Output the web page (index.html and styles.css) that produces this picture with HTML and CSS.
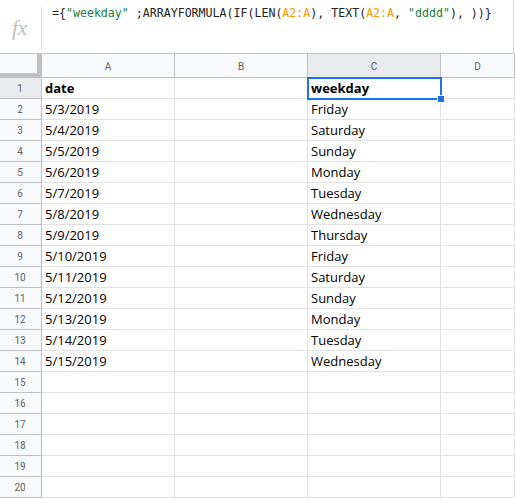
FILE: index.html
```html
<!DOCTYPE html>
<html>
<head>
<meta charset="utf-8">
<link rel="stylesheet" href="styles.css">
</head>
<body>
<div class="formula-bar">
  <div class="fx">fx</div>
  <div class="sep"></div>
  <div class="formula">={<span class="str">"weekday"</span> ;ARRAYFORMULA(IF(LEN(<span class="rng">A2:A</span>), TEXT(<span class="rng">A2:A</span>, <span class="str">"dddd"</span>), ))}</div>
</div>
<div class="sheet">
  <div class="corner"></div>
  <div class="colh">A</div>
  <div class="colh">B</div>
  <div class="colh sel">C</div>
  <div class="colh">D</div>

  <div class="rowh sel">1</div><div class="cell b">date</div><div class="cell"></div><div class="cell b active">weekday<span class="ring"></span><span class="handle"></span></div><div class="cell"></div>
  <div class="rowh">2</div><div class="cell">5/3/2019</div><div class="cell"></div><div class="cell">Friday</div><div class="cell"></div>
  <div class="rowh">3</div><div class="cell">5/4/2019</div><div class="cell"></div><div class="cell">Saturday</div><div class="cell"></div>
  <div class="rowh">4</div><div class="cell">5/5/2019</div><div class="cell"></div><div class="cell">Sunday</div><div class="cell"></div>
  <div class="rowh">5</div><div class="cell">5/6/2019</div><div class="cell"></div><div class="cell">Monday</div><div class="cell"></div>
  <div class="rowh">6</div><div class="cell">5/7/2019</div><div class="cell"></div><div class="cell">Tuesday</div><div class="cell"></div>
  <div class="rowh">7</div><div class="cell">5/8/2019</div><div class="cell"></div><div class="cell">Wednesday</div><div class="cell"></div>
  <div class="rowh">8</div><div class="cell">5/9/2019</div><div class="cell"></div><div class="cell">Thursday</div><div class="cell"></div>
  <div class="rowh">9</div><div class="cell">5/10/2019</div><div class="cell"></div><div class="cell">Friday</div><div class="cell"></div>
  <div class="rowh">10</div><div class="cell">5/11/2019</div><div class="cell"></div><div class="cell">Saturday</div><div class="cell"></div>
  <div class="rowh">11</div><div class="cell">5/12/2019</div><div class="cell"></div><div class="cell">Sunday</div><div class="cell"></div>
  <div class="rowh">12</div><div class="cell">5/13/2019</div><div class="cell"></div><div class="cell">Monday</div><div class="cell"></div>
  <div class="rowh">13</div><div class="cell">5/14/2019</div><div class="cell"></div><div class="cell">Tuesday</div><div class="cell"></div>
  <div class="rowh">14</div><div class="cell">5/15/2019</div><div class="cell"></div><div class="cell">Wednesday</div><div class="cell"></div>
  <div class="rowh">15</div><div class="cell"></div><div class="cell"></div><div class="cell"></div><div class="cell"></div>
  <div class="rowh">16</div><div class="cell"></div><div class="cell"></div><div class="cell"></div><div class="cell"></div>
  <div class="rowh">17</div><div class="cell"></div><div class="cell"></div><div class="cell"></div><div class="cell"></div>
  <div class="rowh">18</div><div class="cell"></div><div class="cell"></div><div class="cell"></div><div class="cell"></div>
  <div class="rowh">19</div><div class="cell"></div><div class="cell"></div><div class="cell"></div><div class="cell"></div>
  <div class="rowh">20</div><div class="cell"></div><div class="cell"></div><div class="cell"></div><div class="cell"></div>
</div>
</body>
</html>
```

FILE: styles.css
```css
* { box-sizing: border-box; }
html, body { margin: 0; padding: 0; background: #fff; overflow: hidden; }
body { width: 515px; height: 499px; }

.formula-bar {
  display: flex;
  height: 54px;
  border-bottom: 1px solid #c4c4c4;
  border-right: 1px solid #dadce0;
  width: 514px;
}
.fx {
  width: 41px;
  padding-top: 18px;
  text-align: center;
  font-family: "Liberation Serif", serif;
  font-style: italic;
  font-size: 21px;
  color: #bdbdbd;
  line-height: 20px;
  padding-right: 2px;
}
.sep {
  width: 1px;
  margin: 7px 0 4px;
  background: #dadce0;
}
.formula {
  padding: 5px 0 0 10px;
  font-family: "DejaVu Sans Mono", monospace;
  font-size: 11.6px;
  line-height: 16px;
  color: #222;
  white-space: nowrap;
}
.str { color: #188038; }
.rng { color: #f29900; }

.sheet {
  display: grid;
  grid-template-columns: 42px 133px 133px 133px 1fr;
  grid-template-rows: 24px repeat(20, 21px);
}
.corner {
  background: #f8f9fa;
  border-right: 5px solid #c0c0c0;
  border-bottom: 5px solid #c0c0c0;
}
.colh {
  background: #f8f9fa;
  border-right: 1px solid #c0c0c0;
  border-bottom: 1px solid #c0c0c0;
  display: flex;
  align-items: center;
  justify-content: center;
  font-family: Roboto, "Liberation Sans", sans-serif;
  font-size: 10px;
  color: #5f6368;
  padding-top: 1px;
}
.colh.sel, .rowh.sel { background: #e8eaed; }
.rowh {
  background: #f8f9fa;
  border-right: 1px solid #c0c0c0;
  border-bottom: 1px solid #c0c0c0;
  display: flex;
  align-items: center;
  justify-content: center;
  font-family: Roboto, "Liberation Sans", sans-serif;
  font-size: 10px;
  color: #5f6368;
  padding-right: 1px;
}
.cell {
  border-right: 1px solid #e2e2e2;
  border-bottom: 1px solid #e2e2e2;
  font-family: "Open Sans", "Noto Sans", sans-serif;
  font-size: 13px;
  line-height: 20px;
  padding: 0 3px;
  color: #000;
  white-space: nowrap;
  position: relative;
}
.cell.b { font-weight: bold; }
.cell.active { z-index: 2; }
.ring {
  position: absolute;
  left: -1px;
  top: -1px;
  right: -2px;
  bottom: -2px;
  border: 2px solid #1a73e8;
}
.handle {
  position: absolute;
  width: 8px;
  height: 8px;
  right: -5px;
  bottom: -5px;
  background: #1a73e8;
  border: 1px solid #fff;
}
```
